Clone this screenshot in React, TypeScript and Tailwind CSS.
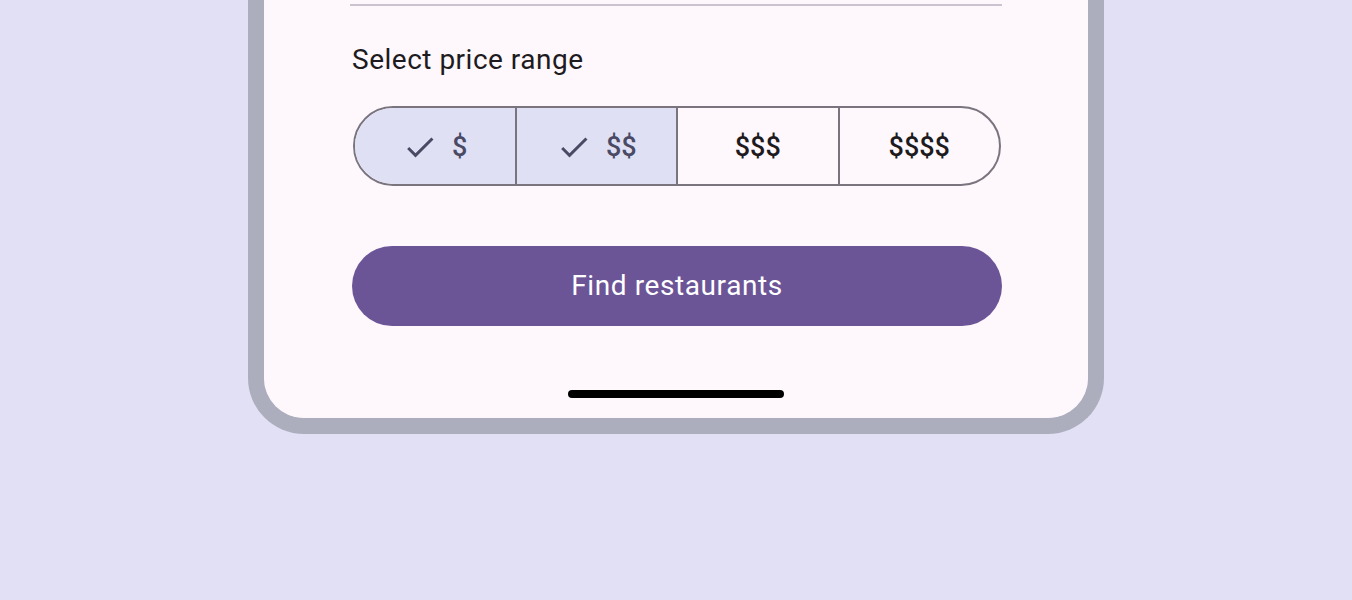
type Option = {
  label: string;
  selected: boolean;
};

const options: Option[] = [
  { label: "$", selected: true },
  { label: "$$", selected: true },
  { label: "$$$", selected: false },
  { label: "$$$$", selected: false },
];

function CheckIcon() {
  return (
    <svg width="36" height="36" viewBox="0 0 24 24" fill="currentColor">
      <path d="M9 16.17 4.83 12l-1.42 1.41L9 19 21 7l-1.41-1.41z" />
    </svg>
  );
}

export default function App() {
  return (
    <div
      className="min-h-[600px] bg-[#e1e0f4]"
      style={{ fontFamily: "Roboto, 'Noto Sans', sans-serif" }}
    >
      <div className="mx-auto w-[856px] border-x-[16px] border-b-[16px] border-[#adaebd] rounded-b-[56px] overflow-hidden">
        <div className="bg-[#fef7fc] flex flex-col items-center pt-[4px] pb-[20px]">
          <div className="w-[652px] h-[2px] bg-[#cac4d0]" />

          <div className="w-[650px] pl-[1px] mt-[36px] text-[28px] leading-[36px] tracking-[0.5px] text-[#1d1b20]">
            Select price range
          </div>

          <div className="w-[648px] h-[80px] ml-[2px] mt-[28px] flex border-2 border-[#79747e] rounded-full overflow-hidden">
            {options.map((o, i) => (
              <div
                key={i}
                className={
                  "flex-1 flex items-center justify-center gap-[14px] pt-[2px] text-[27px] font-medium " +
                  (i > 0 ? "border-l-2 border-[#79747e] " : "") +
                  (o.selected
                    ? "bg-[#e0e0f5] text-[#4a4a65]"
                    : "text-[#1d1b20]")
                }
              >
                {o.selected && <CheckIcon />}
                <span>{o.label}</span>
              </div>
            ))}
          </div>

          <button className="w-[650px] h-[80px] ml-[2px] mt-[60px] rounded-full bg-[#6b5597] text-white text-[28px] tracking-[0.6px]">
            Find restaurants
          </button>

          <div className="w-[216px] h-[8px] mt-[64px] rounded-full bg-black" />
        </div>
      </div>
    </div>
  );
}
